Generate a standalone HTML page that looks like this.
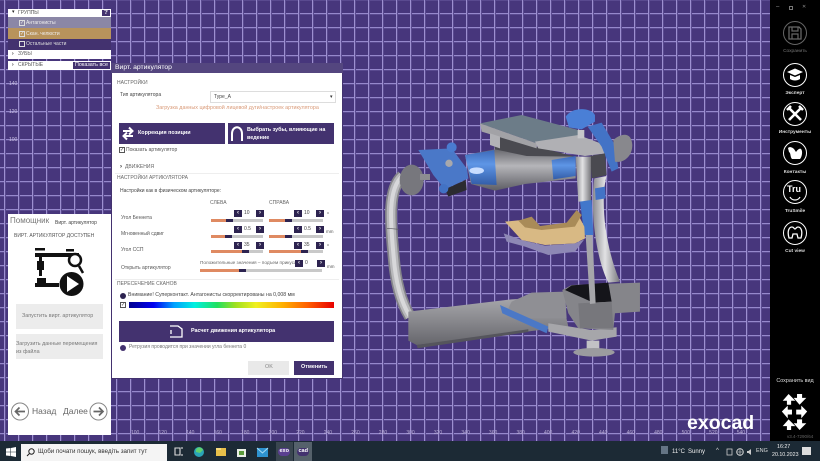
<!DOCTYPE html>
<html lang="ru">
<head>
<meta charset="utf-8">
<title>exocad</title>
<style>
*{box-sizing:border-box;margin:0;padding:0}
html,body{width:820px;height:461px;overflow:hidden;background:#000;font-family:"Liberation Sans",sans-serif}
.a{position:absolute}
.t{position:absolute;white-space:nowrap;line-height:1}
#vp{left:0;top:0;width:770px;height:441px;background-color:#47367c;
background-image:linear-gradient(90deg,#9d8fd0 1px,#5a4a90 1px,#5a4a90 2px,transparent 2px),linear-gradient(#9688cc 1px,#5a4a90 1px,#5a4a90 2px,transparent 2px);
background-size:14px 14px;background-position:4px 13px}
.sp{background:#fff;color:#222;font-size:5px}
.purple{background:#43326f;color:#fff}
.stp{width:8px;height:7px;background:#2d2350;position:absolute;color:#fff;font-size:6px;line-height:7px;text-align:center;font-weight:bold}
.val{position:absolute;width:17px;height:7px;background:#fff;font-size:5px;line-height:7px;color:#444;padding-left:3px}
.sl{position:absolute;height:3px;background:#c9c9c9}
.sl i{position:absolute;left:0;top:0;height:3px;background:#df8a62}
.sl b{position:absolute;top:0;height:3px;background:#2d2350;width:7px}
.rl{position:absolute;left:770px;width:50px;text-align:center;color:#ddd;font-size:4.8px;line-height:1;font-weight:bold}
.ri{position:absolute;left:783px;width:24px;height:24px;border:1.3px solid #fff;border-radius:50%}
.ck{position:absolute;width:6px;height:6px;border:1px solid #555;font-size:5px;line-height:4px;color:#333;text-align:center}
</style>
</head>
<body>
<div class="a" id="vp"></div>

<!-- axis labels -->
<div class="t" style="left:9px;top:82px;font-size:5px;color:#c9c0e2">140</div>
<div class="t" style="left:9px;top:110px;font-size:5px;color:#c9c0e2">120</div>
<div class="t" style="left:9px;top:138px;font-size:5px;color:#c9c0e2">100</div>
<div class="t" style="left:131px;top:431px;font-size:5px;color:#b9aed6;word-spacing:17.8px">100 120 140 160 180 200 220 240 260 280 300 320 340 360 380 400 420 440 460 480 500 520 540</div>

<!-- articulator -->
<svg class="a" style="left:0;top:0" width="770" height="440" viewBox="0 0 770 440">
<defs>
<linearGradient id="cy" x1="0" x2="0" y1="0" y2="1"><stop offset="0" stop-color="#68686e"/><stop offset=".4" stop-color="#b5b5b9"/><stop offset="1" stop-color="#5d5d64"/></linearGradient>
<linearGradient id="bl" x1="0" x2="0" y1="0" y2="1"><stop offset="0" stop-color="#3d69b8"/><stop offset=".4" stop-color="#5e96e6"/><stop offset="1" stop-color="#335da8"/></linearGradient>
<linearGradient id="bar" x1="0" x2="0" y1="0" y2="1"><stop offset="0" stop-color="#a8a8ac"/><stop offset=".5" stop-color="#88888d"/><stop offset="1" stop-color="#66666c"/></linearGradient>
<linearGradient id="post" x1="0" x2="1" y1="0" y2="0"><stop offset="0" stop-color="#8a8a8f"/><stop offset=".45" stop-color="#e2e2e4"/><stop offset="1" stop-color="#77777c"/></linearGradient>
</defs>
<g transform="translate(345 100) scale(.3333)">
<!-- left arc -->
<path d="M172 228C125 270 138 380 146 470C152 550 170 610 195 650" fill="none" stroke="#85858a" stroke-width="36"/>
<path d="M172 228C125 270 138 380 146 470C152 550 170 610 195 650" fill="none" stroke="#b8b8bb" stroke-width="26"/>
<path d="M172 228C125 270 138 380 146 470C152 550 170 610 195 650" fill="none" stroke="#d8d8da" stroke-width="12"/>
<path d="M126 385L162 388" stroke="#55555c" stroke-width="2"/>
<!-- base bar -->
<path d="M190 635L500 598L650 590L670 680L215 735L190 722Z" fill="url(#bar)"/>
<path d="M215 735L550 688L550 696L218 745Z" fill="#55555c"/>
<path d="M500 605L560 578L660 575L665 655L550 655L490 625Z" fill="#8f8f94"/>
<path d="M465 615L610 680L605 700L472 640Z" fill="#4b78c6"/>
<path d="M610 670L740 690L815 682L815 710L740 722L610 695Z" fill="#a6a6aa"/>
<path d="M652 570L680 555L885 548L885 635L810 640L805 690L700 685L670 640Z" fill="#85858a"/>
<path d="M660 570L680 556L790 548L800 605L745 608Z" fill="#15151a"/>
<path d="M700 610L800 605L805 685L705 685Z" fill="#77777c"/>
<rect x="725" y="722" width="38" height="24" fill="#c2c2c5"/>
<ellipse cx="747" cy="757" rx="62" ry="13" fill="#9b9b9f"/>
<!-- top plate -->
<path d="M440 100L575 140L690 170L690 180L540 170L450 150Z" fill="#4a4a50"/>
<path d="M405 70L530 45L700 90L710 105L575 130Z" fill="#6c7c88"/>
<path d="M405 70L575 130L575 145L410 95Z" fill="#a2a2a6"/>
<path d="M570 125L700 105L780 135L780 160L720 168L580 145Z" fill="#b0b0b4"/>
<path d="M435 100L465 110V145L435 135Z" fill="#b2b2b6"/>
<!-- cylinder -->
<path d="M360 165L450 148L545 168L692 170L692 235L540 252L450 272L378 252Z" fill="url(#cy)"/>
<path d="M360 165L448 150L455 255L380 252Z" fill="url(#bl)"/>
<path d="M620 180L692 168L692 228L625 238Z" fill="url(#bl)"/>
<ellipse cx="395" cy="212" rx="22" ry="10" fill="#c8ddff"/>
<!-- left bracket -->
<path d="M220 150L320 145L365 205L370 235L300 268L265 225Z" fill="#4a78c8"/>
<path d="M300 268L362 240L365 270L310 290Z" fill="#2b2b30"/>
<circle cx="320" cy="142" r="15" fill="#4a7cd0"/>
<circle cx="312" cy="190" r="11" fill="#a8a8ac"/>
<circle cx="296" cy="266" r="14" fill="#4272c4"/>
<ellipse cx="200" cy="240" rx="36" ry="46" fill="#77777d"/>
<rect x="225" y="222" width="30" height="18" fill="#8d8d91"/>
<!-- top right -->
<path d="M662 50C680 22 735 20 750 45V65L710 88L672 82Z" fill="#4a7fd6"/>
<rect x="698" y="90" width="20" height="25" fill="#c7c7ca"/>
<path d="M728 80L770 68L810 135L820 205L800 215L770 140Z" fill="#4373c6"/>
<path d="M805 120C835 95 860 100 862 135C862 170 835 190 810 185Z" fill="#88888d"/>
<path d="M735 168L780 160L785 225L740 235Z" fill="#4a4a50"/>
<path d="M692 170H738V305H700Z" fill="url(#post)"/>
<path d="M705 305L740 300L745 405L718 405Z" fill="#4277cb"/>
<path d="M748 235L785 228C765 300 780 440 825 545L790 548C750 470 735 320 748 235Z" fill="url(#post)"/>
<path d="M750 265L780 260L782 295L752 300Z" fill="#4373c6"/>
<path d="M722 405L742 405L752 610L735 612Z" fill="#a6a6aa"/>
<!-- teeth -->
<path d="M476 400L530 420L600 437L690 430L718 418L690 455L610 465L540 440L485 425Z" fill="#8e88b5"/>
<path d="M480 365L530 360L580 382L660 372L700 345L718 380L720 415L690 430L600 435L530 420Z" fill="#d8b984"/>
<path d="M520 362L560 350L585 378L665 368L695 330L710 345L690 380L590 390L540 382Z" fill="#a98b58"/>
</g>
</svg>

<!-- top-left tree -->
<div class="a sp" style="left:8px;top:9px;width:103px;height:8px"></div>
<div class="t" style="left:12px;top:10px;font-size:5px;color:#222">▾</div>
<div class="t" style="left:18px;top:11px;font-size:5px;color:#555">ГРУППЫ</div>
<div class="a purple" style="left:101px;top:9px;width:10px;height:8px;border:1px solid #fff;font-size:6px;line-height:6px;text-align:center;font-weight:bold">?</div>
<div class="a" style="left:8px;top:17px;width:103px;height:11px;background:#8b87a6"></div>
<div class="a" style="left:8px;top:28px;width:103px;height:11px;background:#b8935c"></div>
<div class="a" style="left:8px;top:39px;width:103px;height:11px;background:#43326f"></div>
<div class="a" style="left:19px;top:20px;width:6px;height:6px;border:1px solid #ddd;color:#eee;font-size:5px;line-height:4px">✓</div>
<div class="a" style="left:19px;top:31px;width:6px;height:6px;border:1px solid #ddd;color:#eee;font-size:5px;line-height:4px">✓</div>
<div class="a" style="left:19px;top:41px;width:6px;height:6px;border:1px solid #ddd"></div>
<div class="t" style="left:26px;top:21px;font-size:5px;color:#eee">Антагонисты</div>
<div class="t" style="left:26px;top:32px;font-size:5px;color:#eee">Скан. челюсти</div>
<div class="t" style="left:26px;top:42px;font-size:5px;color:#ddd">Остальные части</div>
<div class="a sp" style="left:8px;top:50px;width:103px;height:9px"></div>
<div class="t" style="left:12px;top:52px;font-size:5px;color:#222;font-weight:bold">›</div>
<div class="t" style="left:18px;top:52px;font-size:5px;color:#555">ЗУБЫ</div>
<div class="a sp" style="left:8px;top:61px;width:64px;height:9px"></div>
<div class="t" style="left:12px;top:63px;font-size:5px;color:#222;font-weight:bold">›</div>
<div class="t" style="left:18px;top:63px;font-size:5px;color:#555">СКРЫТЫЕ</div>
<div class="a purple" style="left:72px;top:61px;width:39px;height:9px;border:1px solid #fff;font-size:5.4px;line-height:7px;text-align:center">Показать все</div>

<!-- helper panel -->
<div class="a" style="left:8px;top:214px;width:103px;height:221px;background:#fff"></div>
<div class="t" style="left:10px;top:217px;font-size:8px;color:#777">Помощник</div>
<div class="t" style="left:55px;top:221px;font-size:5px;color:#444">Вирт. артикулятор</div>
<div class="t" style="left:14px;top:234px;font-size:5px;color:#555">ВИРТ. АРТИКУЛЯТОР ДОСТУПЕН</div>
<svg class="a" style="left:30px;top:244px" width="60" height="54" viewBox="0 0 60 54">
<rect x="5" y="4" width="10" height="2.5" fill="#111"/>
<rect x="5" y="9" width="44" height="4" fill="#111"/>
<rect x="36" y="5" width="8" height="2.5" fill="#111"/>
<rect x="9" y="13" width="3" height="4" fill="#111"/>
<rect x="7" y="17" width="7" height="9" fill="#111"/>
<rect x="9" y="26" width="3" height="6" fill="#111"/>
<rect x="7" y="34" width="9" height="5" fill="#111"/>
<rect x="5" y="39" width="24" height="4" fill="#111"/>
<circle cx="45" cy="16" r="6" fill="#fff" stroke="#111" stroke-width="2.5"/>
<path d="M49 22L53 29" stroke="#111" stroke-width="2.5"/>
<circle cx="41.500" cy="40" r="12" fill="#111"/>
<path d="M37 32L49 40L37 48Z" fill="#fff"/>
</svg>
<div class="a" style="left:16px;top:304px;width:87px;height:25px;background:#ececec"></div>
<div class="t" style="left:22px;top:314px;font-size:5.4px;color:#777">Запустить вирт. артикулятор</div>
<div class="a" style="left:16px;top:334px;width:87px;height:25px;background:#ececec"></div>
<div class="t" style="left:16px;top:340px;font-size:5.4px;color:#777;line-height:8px">Загрузить данные перемещения<br>из файла</div>
<svg class="a" style="left:10px;top:400px" width="100" height="23" viewBox="0 0 100 23">
<circle cx="10" cy="11.500" r="8.500" fill="#fff" stroke="#888" stroke-width="1"/>
<path d="M15 11.500H6M9.500 7.500L5.500 11.500L9.500 15.500" fill="none" stroke="#666" stroke-width="1.700"/>
<circle cx="88.500" cy="11.500" r="8.500" fill="#fff" stroke="#888" stroke-width="1"/>
<path d="M83.500 11.500H93M89 7.500L93 11.500L89 15.500" fill="none" stroke="#666" stroke-width="1.700"/>
</svg>
<div class="t" style="left:32px;top:407px;font-size:8.500px;color:#666">Назад</div>
<div class="t" style="left:63px;top:407px;font-size:8.500px;color:#666">Далее</div>

<!-- dialog -->
<div class="a" style="left:111px;top:63px;width:232px;height:316px;background:#fff;border:1px solid #43326f"></div>
<div class="a" style="left:111px;top:63px;width:232px;height:10px;background:#54467f"></div>
<div class="t" style="left:115px;top:65px;font-size:6.800px;color:#fff">Вирт. артикулятор</div>
<div class="t" style="left:117px;top:81px;font-size:5px;color:#666">НАСТРОЙКИ</div>
<div class="t" style="left:120px;top:93px;font-size:5px;color:#444">Тип артикулятора</div>
<div class="a" style="left:210px;top:91px;width:126px;height:12px;background:#fff;border:1px solid #ddd"></div>
<div class="t" style="left:214px;top:95px;font-size:5px;color:#444">Type_A</div>
<div class="t" style="left:330px;top:95px;font-size:5px;color:#333">▾</div>
<div class="t" style="left:156px;top:106px;font-size:5.400px;color:#d99a78">Загрузка данных цифровой лицевой дуги/настроек артикулятора</div>
<div class="a" style="left:119px;top:123px;width:106px;height:21px;background:#43326f"></div>
<svg class="a" style="left:121px;top:125px" width="14" height="17" viewBox="0 0 14 17"><path d="M2 6H11M8 2.500L11.500 6L8 9.500M12 11H3M6 7.500L2.500 11L6 14.500" fill="none" stroke="#fff" stroke-width="2"/></svg>
<div class="t" style="left:138px;top:131px;font-size:5.400px;color:#fff;font-weight:bold">Коррекция позиции</div>
<div class="a" style="left:228px;top:123px;width:106px;height:21px;background:#43326f"></div>
<svg class="a" style="left:229px;top:126px" width="16" height="16" viewBox="0 0 16 16"><path d="M3 15V8C3 -1 13 -1 13 8V15" fill="none" stroke="#fff" stroke-width="2"/></svg>
<div class="t" style="left:247px;top:126px;font-size:5.400px;color:#fff;font-weight:bold;line-height:8px">Выбрать зубы, влияющие на<br>ведение</div>
<div class="ck" style="left:119px;top:147px">✓</div>
<div class="t" style="left:126px;top:148px;font-size:5px;color:#555">Показать артикулятор</div>
<div class="t" style="left:120px;top:164px;font-size:6px;color:#222;font-weight:bold">›</div>
<div class="t" style="left:125px;top:165px;font-size:5px;color:#666">ДВИЖЕНИЯ</div>
<div class="a" style="left:115px;top:173px;width:224px;height:1px;background:#eee"></div>
<div class="t" style="left:117px;top:176px;font-size:5px;color:#666">НАСТРОЙКИ АРТИКУЛЯТОРА</div>
<div class="t" style="left:120px;top:189px;font-size:5px;color:#444">Настройки как в физическом артикуляторе:</div>
<div class="t" style="left:210px;top:201px;font-size:5px;color:#666">СЛЕВА</div>
<div class="t" style="left:269px;top:201px;font-size:5px;color:#666">СПРАВА</div>
<div class="t" style="left:121px;top:216px;font-size:5px;color:#555">Угол Беннета</div>
<div class="t" style="left:121px;top:232px;font-size:5px;color:#555">Мгновенный сдвиг</div>
<div class="t" style="left:121px;top:248px;font-size:5px;color:#555">Угол ССП</div>
<div class="t" style="left:121px;top:266px;font-size:5px;color:#555">Открыть артикулятор</div>

<div class="val" style="left:241px;top:210px">10</div><div class="stp" style="left:234px;top:210px">‹</div><div class="stp" style="left:256px;top:210px">›</div>
<div class="val" style="left:301px;top:210px">10</div><div class="stp" style="left:294px;top:210px">‹</div><div class="stp" style="left:316px;top:210px">›</div>
<div class="val" style="left:241px;top:226px">0.5</div><div class="stp" style="left:234px;top:226px">‹</div><div class="stp" style="left:256px;top:226px">›</div>
<div class="val" style="left:301px;top:226px">0.5</div><div class="stp" style="left:294px;top:226px">‹</div><div class="stp" style="left:316px;top:226px">›</div>
<div class="val" style="left:241px;top:242px">35</div><div class="stp" style="left:234px;top:242px">‹</div><div class="stp" style="left:256px;top:242px">›</div>
<div class="val" style="left:301px;top:242px">35</div><div class="stp" style="left:294px;top:242px">‹</div><div class="stp" style="left:316px;top:242px">›</div>
<div class="t" style="left:200px;top:261px;font-size:4.700px;color:#666">Положительные значения – подъем прикуса</div>
<div class="val" style="left:302px;top:260px">0</div><div class="stp" style="left:295px;top:260px">‹</div><div class="stp" style="left:317px;top:260px">›</div>
<div class="t" style="left:327px;top:213px;font-size:5px;color:#444">°</div>
<div class="t" style="left:326px;top:230px;font-size:4.500px;color:#555">mm</div>
<div class="t" style="left:327px;top:245px;font-size:5px;color:#444">°</div>
<div class="t" style="left:327px;top:265px;font-size:4.500px;color:#555">mm</div>

<div class="sl" style="left:211px;top:219px;width:52px"><i style="width:15px"></i><b style="left:15px"></b></div>
<div class="sl" style="left:269px;top:219px;width:54px"><i style="width:16px"></i><b style="left:16px"></b></div>
<div class="sl" style="left:211px;top:235px;width:52px"><i style="width:14px"></i><b style="left:14px"></b></div>
<div class="sl" style="left:269px;top:235px;width:54px"><i style="width:16px"></i><b style="left:16px"></b></div>
<div class="sl" style="left:211px;top:250px;width:52px"><i style="width:31px"></i><b style="left:31px"></b></div>
<div class="sl" style="left:269px;top:250px;width:54px"><i style="width:32px"></i><b style="left:32px"></b></div>
<div class="sl" style="left:200px;top:269px;width:122px"><i style="width:39px"></i><b style="left:39px"></b></div>

<div class="a" style="left:115px;top:279px;width:224px;height:1px;background:#eee"></div>
<div class="t" style="left:117px;top:282px;font-size:5px;color:#666">ПЕРЕСЕЧЕНИЕ СКАНОВ</div>
<div class="a" style="left:120px;top:293px;width:6px;height:6px;border-radius:50%;background:#2d2350"></div>
<div class="t" style="left:128px;top:293px;font-size:5.200px;color:#444">Внимание! Суперконтакт. Антагонисты скорректированы на 0,008 мм</div>
<div class="ck" style="left:120px;top:302px">✓</div>
<div class="a" style="left:129px;top:302px;width:205px;height:6px;background:linear-gradient(90deg,#00008f 0%,#0000f0 12%,#00a0ff 22%,#00f0e0 32%,#20e060 43%,#a0e020 52%,#f0f020 62%,#ffb000 75%,#ff6000 87%,#e80000 100%)"></div>
<div class="a" style="left:119px;top:321px;width:215px;height:21px;background:#43326f"></div>
<svg class="a" style="left:168px;top:324px" width="16" height="15" viewBox="0 0 16 15"><path d="M2 2H10L14 5V13H2" fill="none" stroke="#fff" stroke-width="1.300"/><path d="M3 6V10" stroke="#fff" stroke-width="1.300"/></svg>
<div class="t" style="left:191px;top:329px;font-size:5.400px;color:#fff;font-weight:bold">Расчет движения артикулятора</div>
<div class="a" style="left:120px;top:345px;width:6px;height:6px;border-radius:50%;background:#43326f"></div>
<div class="t" style="left:129px;top:345px;font-size:5px;color:#777">Ретрузия проводится при значении угла беннета 0</div>
<div class="a" style="left:248px;top:361px;width:41px;height:14px;background:#e9e9e9"></div>
<div class="t" style="left:265px;top:365px;font-size:5.400px;color:#888">OK</div>
<div class="a" style="left:294px;top:361px;width:40px;height:14px;background:#43326f"></div>
<div class="t" style="left:301px;top:365px;font-size:5.400px;color:#fff;font-weight:bold">Отменить</div>

<!-- right panel -->
<div class="a" style="left:770px;top:0;width:50px;height:441px;background:#000"></div>
<div class="t" style="left:776px;top:4px;font-size:6px;color:#999">–</div>
<div class="a" style="left:789px;top:6px;width:4px;height:4px;border:1px solid #777"></div>
<div class="t" style="left:802px;top:5px;font-size:5px;color:#888">✕</div>
<div class="ri" style="top:21px;border-color:#666"></div>
<svg class="a" style="left:788px;top:26px" width="14" height="14" viewBox="0 0 14 14"><path d="M1 1H11L13 3V13H1Z" fill="none" stroke="#666" stroke-width="1.300"/><path d="M4 1V5H10V1M4 13V8H10V13" fill="none" stroke="#666" stroke-width="1.200"/></svg>
<div class="rl" style="top:50px;color:#777;font-weight:normal">Сохранить</div>
<div class="ri" style="top:63px"></div>
<svg class="a" style="left:786px;top:67px" width="18" height="16" viewBox="0 0 18 16"><path d="M1 5L9 1.500L17 5L9 8.500Z" fill="#fff"/><path d="M4 8V12C7 14 11 14 14 12V8L9 10Z" fill="#fff"/></svg>
<div class="rl" style="top:92px">Эксперт</div>
<div class="ri" style="top:102px"></div>
<svg class="a" style="left:786px;top:105px" width="18" height="18" viewBox="0 0 18 18"><path d="M3 3L15 15M15 3L3 15" stroke="#fff" stroke-width="2.600"/><path d="M1 5L5 1M13 1L17 5" stroke="#fff" stroke-width="2.500"/></svg>
<div class="rl" style="top:131px">Инструменты</div>
<div class="ri" style="top:141px"></div>
<svg class="a" style="left:787px;top:145px" width="16" height="16" viewBox="0 0 16 16"><path d="M1 3C3 1 6 3 7 4L9 7C11 4 13 3 14 4C16 6 15 12 13 14H5C3 12 4 8 2 7Z" fill="#fff"/></svg>
<div class="rl" style="top:171px">Контакты</div>
<div class="ri" style="top:180px"></div>
<div class="t" style="left:787px;top:185px;font-size:9px;color:#fff;font-weight:bold">Tru</div>
<svg class="a" style="left:789px;top:196px" width="12" height="6" viewBox="0 0 12 6"><path d="M1 1C3 5 9 5 11 1" fill="none" stroke="#fff" stroke-width="1.200"/></svg>
<div class="rl" style="top:210px">TruSmile</div>
<div class="ri" style="top:221px"></div>
<svg class="a" style="left:787px;top:225px" width="16" height="16" viewBox="0 0 16 16"><path d="M2 13C0 6 2 2 5 2C7 2 7 4 8 4C9 4 9 2 11 2C14 2 16 6 14 13H11L10 9H6L5 13Z" fill="none" stroke="#fff" stroke-width="1.300"/></svg>
<div class="rl" style="top:250px">Cut view</div>
<div class="rl" style="top:379px;font-size:5.400px;font-weight:normal;color:#ddd">Сохранить вид</div>
<svg class="a" style="left:781px;top:393px" width="27" height="39" viewBox="0 0 32 40" preserveAspectRatio="none" fill="#fff">
<path d="M9 1L17 8H12V12H7V8H2Z"/><path d="M19 1H25V5H30L22 12L15 5H19Z"/>
<path d="M1 19L8 13V17H13V22H8V26Z"/><path d="M31 19L24 13V17H18V22H24V26Z"/>
<path d="M9 27L17 34H12V38H7V34H2Z"/><path d="M19 27H25V31H30L22 38L15 31H19Z"/>
</svg>
<div class="t" style="left:787px;top:435px;font-size:4.500px;color:#666">v3.4-7290/64</div>

<!-- exocad -->
<div class="t" style="left:687px;top:414px;font-size:19.500px;color:#fff;font-weight:bold">exocad</div>

<!-- taskbar -->
<div class="a" style="left:0;top:441px;width:820px;height:20px;background:#1c2a35"></div>
<svg class="a" style="left:6px;top:447px" width="10" height="10" viewBox="0 0 10 10" fill="#fff"><path d="M0 1.500L4.500 1V4.700H0ZM5 1L10 0V4.700H5ZM0 5.200H4.500V9L0 8.500ZM5 5.200H10V10L5 9Z"/></svg>
<div class="a" style="left:21px;top:444px;width:146px;height:17px;background:#f4f4f4"></div>
<svg class="a" style="left:26px;top:448px" width="9" height="9" viewBox="0 0 9 9"><circle cx="5.500" cy="3.500" r="2.700" fill="none" stroke="#222"/><path d="M3.500 5.500L1 8" stroke="#222" stroke-width="1.100"/></svg>
<div class="t" style="left:38px;top:449px;font-size:6.200px;color:#333">Щоби почати пошук, введіть запит тут</div>
<svg class="a" style="left:173px;top:446px" width="140" height="12" viewBox="0 0 140 12">
<path d="M2 2H7V9H2ZM9 1V3M9 8V10" fill="none" stroke="#ddd" stroke-width="1.100"/>
<circle cx="26" cy="6" r="5" fill="#2aa5b8"/><path d="M23 6A3 3 0 0 1 30 4L27 7Z" fill="#60d070"/>
<rect x="43" y="2" width="10" height="8" fill="#e8c04a"/><rect x="43" y="2" width="5" height="2" fill="#f5dc80"/>
<rect x="64" y="3" width="9" height="8" fill="#e9efe6"/><rect x="66" y="5" width="5" height="4" fill="#5a9a3a"/>
<rect x="84" y="2" width="11" height="9" fill="#2e93d0"/><path d="M84 2L89.500 7L95 2" fill="none" stroke="#a8dcf5"/>
</svg>
<div class="a" style="left:276px;top:442px;width:17px;height:19px;background:#3a4650"></div>
<div class="a" style="left:294px;top:442px;width:18px;height:19px;background:#55616b"></div>
<div class="t" style="left:278px;top:448px;font-size:5.500px;color:#fff;font-weight:bold;background:#5a3f90;border-radius:4px;padding:1px 1.500px">exo</div>
<div class="t" style="left:297px;top:448px;font-size:5.500px;color:#fff;font-weight:bold;background:#43326f;border-radius:4px;padding:1px 1.500px">cad</div>
<div class="a" style="left:661px;top:446px;width:7px;height:8px;background:#657585"></div>
<div class="t" style="left:672px;top:449px;font-size:6px;color:#eee">11°C</div>
<div class="t" style="left:688px;top:449px;font-size:6px;color:#eee">Sunny</div>
<div class="t" style="left:716px;top:448px;font-size:6px;color:#ddd">^</div>
<svg class="a" style="left:726px;top:448px" width="26" height="8" viewBox="0 0 26 8"><rect x="1" y="1" width="5" height="6" fill="none" stroke="#ccc" stroke-width=".8"/><circle cx="14" cy="4" r="3.300" fill="none" stroke="#ddd" stroke-width=".9"/><path d="M10.500 4H17.500M14 .7V7.300" stroke="#ddd" stroke-width=".6"/><path d="M21 3H22.500L25 1V7L22.500 5H21Z" fill="#ccc"/></svg>
<div class="t" style="left:756px;top:449px;font-size:5.500px;color:#ddd">ENG</div>
<div class="t" style="left:777px;top:445px;font-size:5.300px;color:#eee">16:27</div>
<div class="t" style="left:772px;top:453px;font-size:5.300px;color:#eee">20.10.2023</div>
<div class="a" style="left:802px;top:447px;width:9px;height:8px;background:#ddd"></div>
</body>
</html>
